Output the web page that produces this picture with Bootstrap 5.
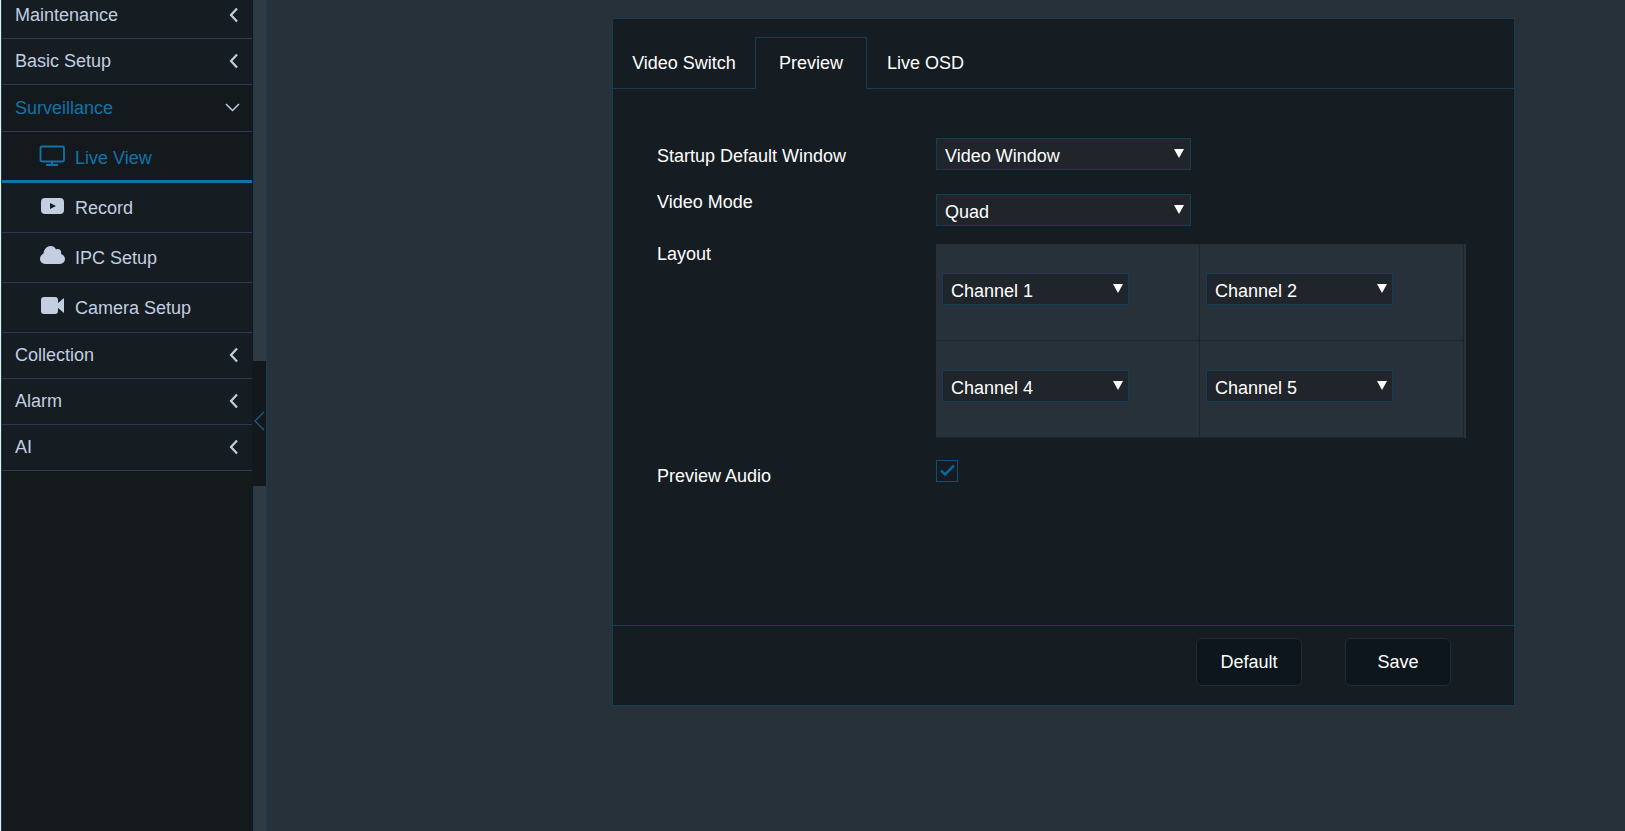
<!DOCTYPE html>
<html lang="en">
<head>
<meta charset="utf-8">
<meta name="viewport" content="width=device-width, initial-scale=1">
<title>Live View - Preview</title>
<link href="https://cdn.jsdelivr.net/npm/bootstrap@5.3.0/dist/css/bootstrap.min.css" rel="stylesheet">
<style>
  :root { --edge: #143e56; --panel: #151c22; --accent: #0f75a9; --menu-text: #c3cee0; }
  body { font-family: "Liberation Sans", Arial, sans-serif; font-size: 18px; line-height: 24px; color: #fff; background: #273139; }
  .side { width: 253px; background: #14191b; border-left: 1px solid #e8eeee; box-shadow: inset 1px 0 #143c4b; padding-left: 1px; overflow: hidden; }
  .menu { margin-top: -7px; padding-right: 1px; }
  .menu a { color: var(--menu-text); text-decoration: none; background: var(--panel); border-bottom: 1px solid #323656; }
  .menu .top-item { height: 46px; padding: 0 12px 1px 13px; }
  .menu .top-item.open { height: 47px; color: var(--accent); background: #14191d; }
  .menu .sub-item { height: 50px; padding: 1px 0 0 36px; gap: 9px; }
  .menu .sub-item svg { margin-bottom: 4px; }
  .menu .sub-item.current { height: 51px; padding-top: 4px; color: var(--accent); background: #14191d; border-bottom: 3px solid var(--accent); }
  .menu .chev { color: var(--menu-text); }
  .rail { width: 14px; background: #2f3a42; border-left: 1px solid var(--edge); border-right: 1px solid var(--edge); }
  .rail button { top: 50%; left: -1px; width: 13px; height: 125px; margin-top: -55px; padding: 0 0 4px; background: #12181b; color: #1f5a86; }
  .work { padding: 18px 110px 18px 345px; }
  .panel { background: var(--panel); border: 1px solid var(--edge); }
  .nav-tabs { padding-top: 18px; border-bottom: 1px solid var(--edge); --bs-nav-tabs-border-width: 1px; }
  .nav-tabs .nav-link { height: 52px; padding: 0 19px; border-radius: 0; color: #fff; border-color: transparent; }
  .nav-tabs .nav-link:hover { border-color: transparent; }
  .nav-tabs .tab-wide { width: 142px; }
  .nav-tabs .tab-slim { width: 112px; }
  .nav-tabs .nav-link.active { color: #fff; background: var(--panel); border-color: var(--edge) var(--edge) var(--panel); }
  .settings { min-height: 536px; padding: 49px 44px 0; }
  .field-name { width: 279px; flex: none; }
  .pick { width: 255px; height: 32px; padding: 3px 24px 0 8px; font-size: 18px; line-height: 24px; color: #fff; border: 1px solid var(--edge); border-radius: 0;
    background: #1f252a url("data:image/svg+xml,%3Csvg xmlns='http://www.w3.org/2000/svg' width='10' height='9'%3E%3Cpath d='M0 0h10L5 9z' fill='white'/%3E%3C/svg%3E") no-repeat right 6px top 10px / 10px 9px; }
  .pick:focus { color: #fff; border-color: var(--accent); box-shadow: none; background-color: #1f252a; }
  .slots { flex: 0 1 530px; display: grid; grid-template-columns: 1fr 1fr; background: #273139; border-right: 2px solid #2a333b; margin-top: 2px; }
  .slot { height: 97px; padding: 29px 6px 0; border-right: 1px solid #1e262c; border-bottom: 1px solid #1e262c; }
  .slot .pick { width: 187px; background-position: right 5px top 10px; }
  .audio-row { margin-top: 22px; }
  .form-check-input.tick { width: 22px; height: 22px; margin: 0; border: 1px solid #0e5078; border-radius: 0; background-color: #151b21; }
  .form-check-input.tick:checked { background: #151b21 url("data:image/svg+xml,%3Csvg xmlns='http://www.w3.org/2000/svg' viewBox='0 0 20 20'%3E%3Cpath d='M4 9.5l4 4L17 4.500' fill='none' stroke='%230d6592' stroke-width='2.600'/%3E%3C/svg%3E") center / 100% no-repeat; border-color: #0e5078; }
  .actions { height: 80px; padding: 12px 63px 0 0; gap: 43px; border-top: 1px solid var(--edge); }
  .btn-act { width: 106px; height: 48px; padding: 0; font-size: 18px; line-height: 24px; color: #fff; background: #0c161c; border: 1px solid #222b34; border-radius: 6px; }
  .btn-act:hover { color: #fff; border-color: var(--accent); }
</style>
</head>
<body>
<div class="d-flex min-vh-100">
  <nav class="side flex-shrink-0" aria-label="Main menu">
    <div class="menu d-flex flex-column">
      <a href="#" class="top-item d-flex align-items-center justify-content-between">Maintenance <svg class="chev" width="14" height="16" fill="none" stroke="currentColor" stroke-width="2.200"><path d="M11 1.500L5 8l6 6.500"/></svg></a>
      <a href="#" class="top-item d-flex align-items-center justify-content-between">Basic Setup <svg class="chev" width="14" height="16" fill="none" stroke="currentColor" stroke-width="2.200"><path d="M11 1.500L5 8l6 6.500"/></svg></a>
      <a href="#" class="top-item open d-flex align-items-center justify-content-between">Surveillance <svg class="chev" width="15" height="10" fill="none" stroke="currentColor" stroke-width="1.500"><path d="M1 1l6.500 6.500L14 1"/></svg></a>
      <a href="#" class="sub-item current d-flex align-items-center"><svg width="28" height="22" fill="none" stroke="currentColor" stroke-width="1.800"><rect x="2.500" y="1.500" width="23.500" height="15" rx="1.500"/><path d="M14 16.500v3M8 20h12"/></svg>Live View</a>
      <a href="#" class="sub-item d-flex align-items-center"><svg width="28" height="22" fill="currentColor"><path fill-rule="evenodd" d="M7 3h15q4 0 4 4v8q0 4-4 4H7q-4 0-4-4V7q0-4 4-4zm5 5v6l6-3z"/></svg>Record</a>
      <a href="#" class="sub-item d-flex align-items-center"><svg width="28" height="22" fill="currentColor"><path d="M7 19a5 5 0 0 1-5-5c0-3 2-4.500 3.500-5.500C6 4 9 1 12.500 1c3 0 4.500 1.500 5.500 3.500 3-1.500 6 .5 5 4.500 2 .7 4 2.500 4 5a5 5 0 0 1-5 5z"/></svg>IPC Setup</a>
      <a href="#" class="sub-item d-flex align-items-center"><svg width="28" height="22" fill="currentColor"><path d="M6 2h11q3 0 3 3v11q0 3-3 3H6q-3 0-3-3V5q0-3 3-3zM26 3v15l-6-5V8z"/></svg>Camera Setup</a>
      <a href="#" class="top-item d-flex align-items-center justify-content-between">Collection <svg class="chev" width="14" height="16" fill="none" stroke="currentColor" stroke-width="2.200"><path d="M11 1.500L5 8l6 6.500"/></svg></a>
      <a href="#" class="top-item d-flex align-items-center justify-content-between">Alarm <svg class="chev" width="14" height="16" fill="none" stroke="currentColor" stroke-width="2.200"><path d="M11 1.500L5 8l6 6.500"/></svg></a>
      <a href="#" class="top-item d-flex align-items-center justify-content-between">AI <svg class="chev" width="14" height="16" fill="none" stroke="currentColor" stroke-width="2.200"><path d="M11 1.500L5 8l6 6.500"/></svg></a>
    </div>
  </nav>
  <div class="rail position-relative flex-shrink-0">
    <button type="button" class="position-absolute border-0 d-flex align-items-center justify-content-center" aria-label="Collapse menu"><svg width="11" height="20" fill="none" stroke="currentColor" stroke-width="1.300"><path d="M10 1L1 10l9 9"/></svg></button>
  </div>
  <main class="work flex-grow-1">
    <form class="panel">
      <ul class="nav nav-tabs">
        <li class="nav-item"><a class="nav-link tab-wide text-nowrap d-flex align-items-center justify-content-center" href="#">Video Switch</a></li>
        <li class="nav-item"><a class="nav-link tab-slim active d-flex align-items-center justify-content-center" aria-current="page" href="#">Preview</a></li>
        <li class="nav-item"><a class="nav-link text-nowrap d-flex align-items-center" href="#">Live OSD</a></li>
      </ul>
      <div class="settings">
        <div class="d-flex align-items-center mb-3 pb-1">
          <label class="field-name pt-1" for="startup">Startup Default Window</label>
          <select class="pick form-select" id="startup"><option>Video Window</option></select>
        </div>
        <div class="d-flex align-items-start mb-3">
          <label class="field-name" for="mode">Video Mode</label>
          <select class="pick form-select mt-1" id="mode"><option>Quad</option></select>
        </div>
        <div class="d-flex align-items-start">
          <div class="field-name">Layout</div>
          <div class="slots">
            <div class="slot"><select class="pick form-select" aria-label="Window 1"><option>Channel 1</option></select></div>
            <div class="slot"><select class="pick form-select" aria-label="Window 2"><option>Channel 2</option></select></div>
            <div class="slot"><select class="pick form-select" aria-label="Window 3"><option>Channel 4</option></select></div>
            <div class="slot"><select class="pick form-select" aria-label="Window 4"><option>Channel 5</option></select></div>
          </div>
        </div>
        <div class="audio-row d-flex align-items-start">
          <label class="field-name pt-1" for="audio">Preview Audio</label>
          <input class="form-check-input tick" type="checkbox" id="audio" checked>
        </div>
      </div>
      <div class="actions d-flex justify-content-end">
        <button type="button" class="btn btn-act">Default</button>
        <button type="button" class="btn btn-act">Save</button>
      </div>
    </form>
  </main>
</div>
<script src="https://cdn.jsdelivr.net/npm/bootstrap@5.3.0/dist/js/bootstrap.bundle.min.js"></script>
</body>
</html>
